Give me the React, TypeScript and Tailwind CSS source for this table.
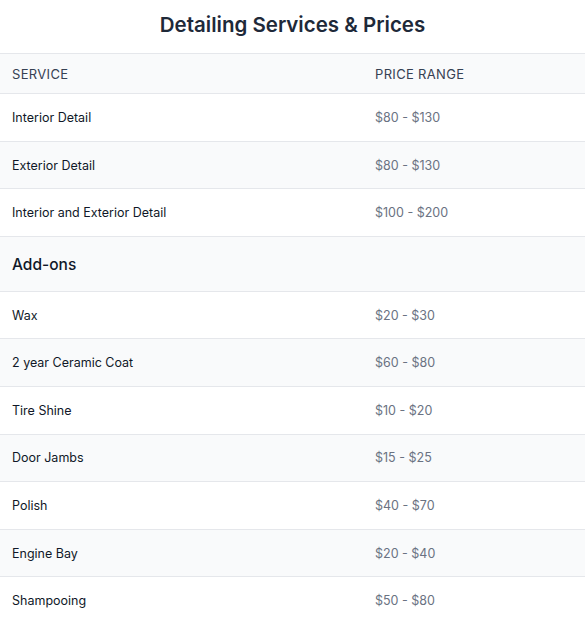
const services = [
  { name: 'Interior Detail', price: '$80 - $130' },
  { name: 'Exterior Detail', price: '$80 - $130' },
  { name: 'Interior and Exterior Detail', price: '$100 - $200' },
]

const addons = [
  { name: 'Wax', price: '$20 - $30' },
  { name: '2 year Ceramic Coat', price: '$60 - $80' },
  { name: 'Tire Shine', price: '$10 - $20' },
  { name: 'Door Jambs', price: '$15 - $25' },
  { name: 'Polish', price: '$40 - $70' },
  { name: 'Engine Bay', price: '$20 - $40' },
  { name: 'Shampooing', price: '$50 - $80' },
]

function Row({ name, price, shaded }: { name: string; price: string; shaded: boolean }) {
  return (
    <div
      className={`grid grid-cols-[363px_1fr] items-center h-[47.6px] pt-[2px] border-b border-gray-200 text-[12.5px] ${
        shaded ? 'bg-gray-50' : 'bg-white'
      }`}
    >
      <div className="px-3 text-gray-900">{name}</div>
      <div className="px-3 text-gray-500">{price}</div>
    </div>
  )
}

export default function App() {
  return (
    <div className="w-[585px] h-[624px] overflow-hidden bg-white font-['Inter',sans-serif]">
      {/* TITLE */}
      <div className="h-[53px] flex items-center justify-center pb-[2px]">
        <h1 className="text-[20.5px] font-semibold text-gray-800">
          Detailing Services &amp; Prices
        </h1>
      </div>

      {/* HEADER */}
      <div className="grid grid-cols-[363px_1fr] items-center h-[41px] pt-[2px] border-y border-gray-200 bg-gray-50 text-[13px] tracking-wide text-gray-700">
        <div className="px-3">SERVICE</div>
        <div className="px-3">PRICE RANGE</div>
      </div>

      {services.map((s, i) => (
        <Row key={s.name} name={s.name} price={s.price} shaded={i % 2 === 1} />
      ))}

      {/* ADD-ONS */}
      <div className="h-[55px] flex items-center px-3 pt-[2px] bg-gray-50 border-b border-gray-200">
        <span className="text-[15.5px] font-medium text-gray-900">Add-ons</span>
      </div>

      {addons.map((s, i) => (
        <Row key={s.name} name={s.name} price={s.price} shaded={i % 2 === 1} />
      ))}
    </div>
  )
}
